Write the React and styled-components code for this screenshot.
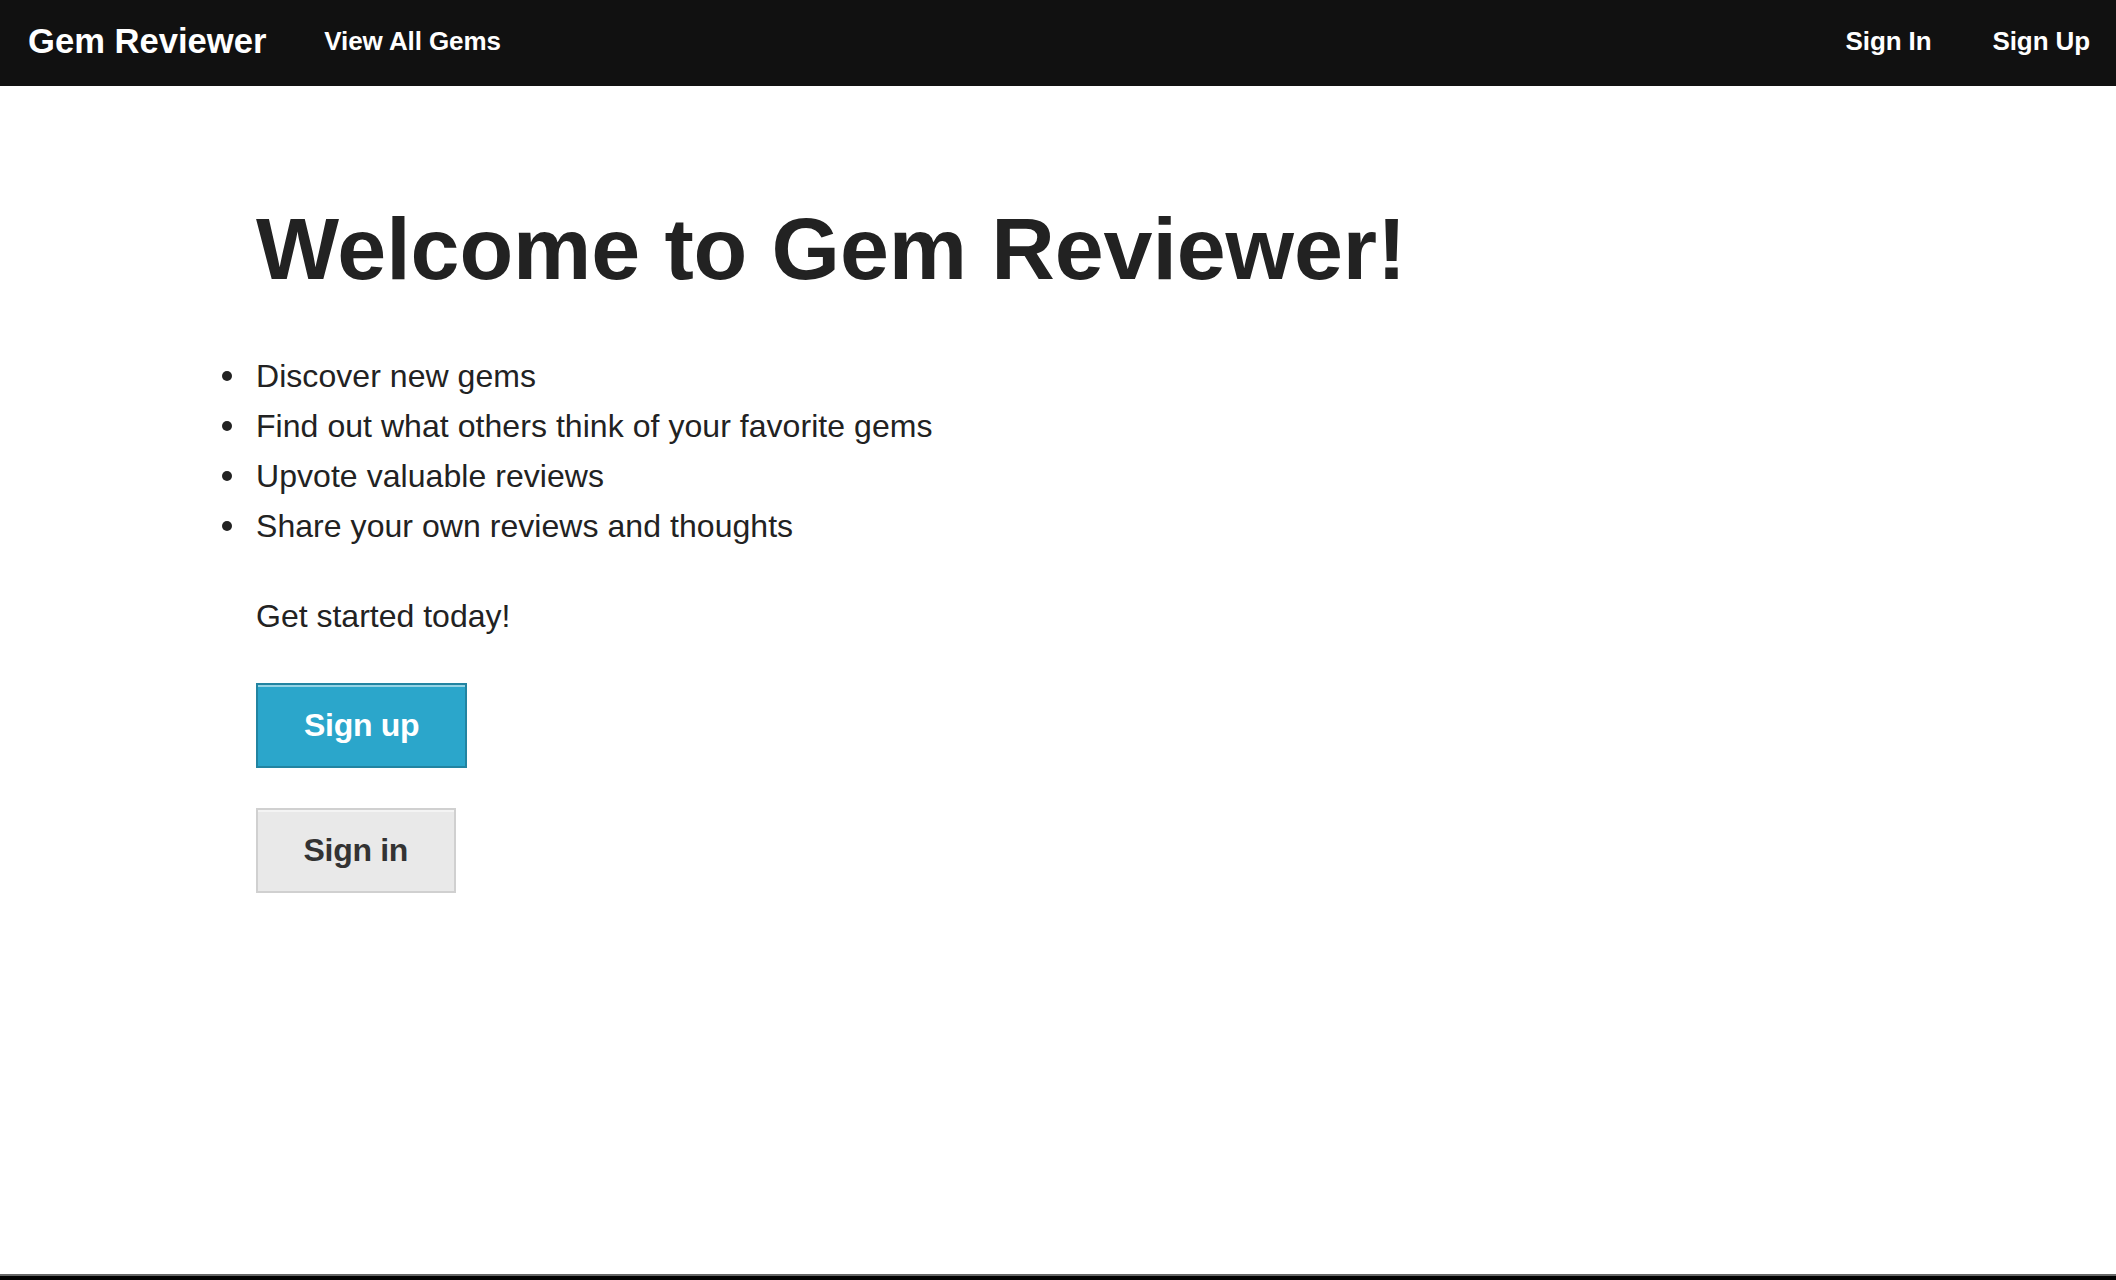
import React from "react";
import styled, { createGlobalStyle } from "styled-components";

const GlobalStyle = createGlobalStyle`
  * {
    box-sizing: border-box;
  }

  body {
    margin: 0;
    background: #fff;
    color: #222;
    font-family: "Liberation Sans", Arial, Helvetica, sans-serif;
  }
`;

const Page = styled.div`
  display: flex;
  flex-direction: column;
  min-height: 100vh;
`;

const TopBar = styled.nav`
  display: flex;
  align-items: center;
  height: 86px;
  padding: 0 26px 4px 28px;
  background-color: #111;
`;

const Title = styled.a`
  color: #fff;
  font-size: 34.6px;
  font-weight: 700;
  text-decoration: none;
  margin-right: 58px;
`;

const NavLink = styled.a`
  color: #fff;
  font-size: 26px;
  font-weight: 700;
  letter-spacing: -0.1px;
  text-decoration: none;
  margin-left: ${(props) => props.$gap || 0}px;
`;

const Spacer = styled.div`
  flex: 1;
`;

const Content = styled.main`
  padding: 115px 256px 0;
`;

const Heading = styled.h1`
  margin: 0 0 53px;
  font-size: 88px;
  line-height: 96.8px;
  font-weight: 700;
  letter-spacing: -0.1px;
  color: #222;
`;

const List = styled.ul`
  margin: 0 0 40px;
  padding: 0;
  list-style: none;
  font-size: 32px;
  line-height: 50px;
  letter-spacing: 0.05px;
  color: #222;
`;

const Item = styled.li`
  display: flex;
  align-items: center;

  &::before {
    content: "";
    flex: none;
    width: 10px;
    height: 10px;
    margin: 0 24px 0 -34px;
    border-radius: 50%;
    background-color: #222;
  }
`;

const Text = styled.p`
  margin: 0 0 42px;
  font-size: 32px;
  line-height: 50px;
  color: #222;
`;

const Actions = styled.div`
  display: flex;
  flex-direction: column;
  align-items: flex-start;
  gap: 40px;
`;

const Button = styled.a`
  display: inline-flex;
  align-items: center;
  justify-content: center;
  height: 85px;
  padding: 0 ${(props) => (props.$primary ? 46 : 45.5)}px;
  font-size: 32px;
  font-weight: 700;
  letter-spacing: -0.3px;
  text-decoration: none;
  color: ${(props) => (props.$primary ? "#fff" : "#333")};
  background-color: ${(props) => (props.$primary ? "#2ba6cb" : "#e9e9e9")};
  border: 2px solid ${(props) => (props.$primary ? "#2284a1" : "#d0d0d0")};
  box-shadow: inset 0 2px 0 rgba(255, 255, 255, 0.5);
  cursor: pointer;
`;

const Footer = styled.footer`
  margin-top: auto;
  height: 6px;
  background-color: #000;
  border-top: 2px solid #666;
`;

const features = [
  "Discover new gems",
  "Find out what others think of your favorite gems",
  "Upvote valuable reviews",
  "Share your own reviews and thoughts",
];

const App = () => {
  return (
    <Page>
      <GlobalStyle />
      <TopBar>
        <Title href="#">Gem Reviewer</Title>
        <NavLink href="#">View All Gems</NavLink>
        <Spacer />
        <NavLink href="#">Sign In</NavLink>
        <NavLink href="#" $gap={61}>
          Sign Up
        </NavLink>
      </TopBar>
      <Content>
        <Heading>Welcome to Gem Reviewer!</Heading>
        <List>
          {features.map((feature) => (
            <Item key={feature}>{feature}</Item>
          ))}
        </List>
        <Text>Get started today!</Text>
        <Actions>
          <Button href="#" $primary>
            Sign up
          </Button>
          <Button href="#">Sign in</Button>
        </Actions>
      </Content>
      <Footer />
    </Page>
  );
};

export default App;
